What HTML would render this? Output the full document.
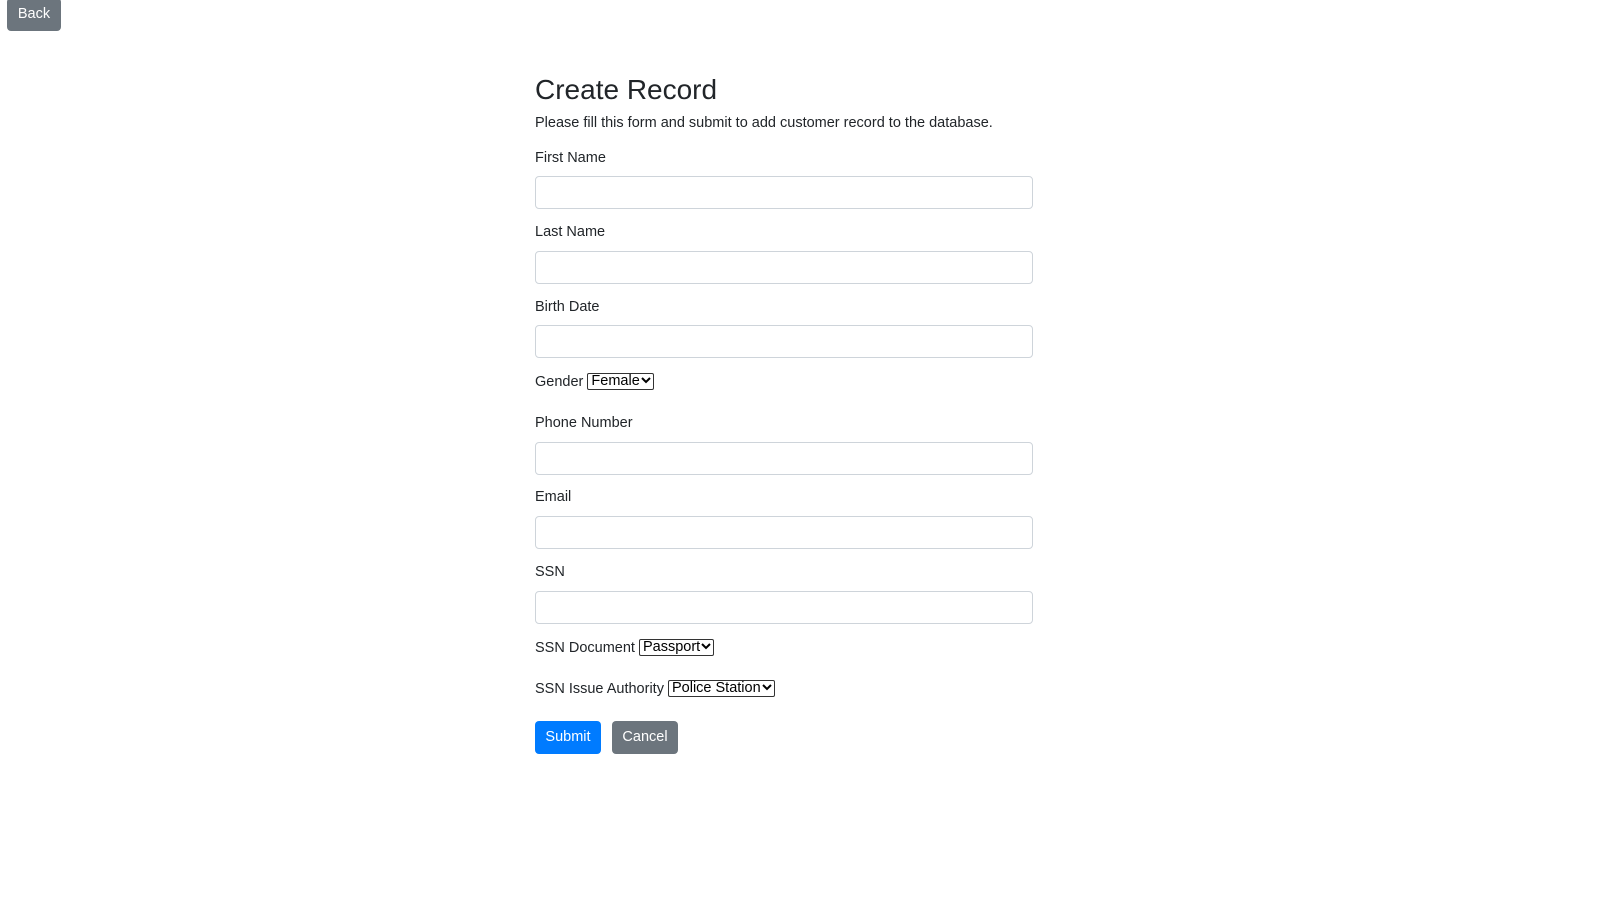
<!DOCTYPE html>
<html><head><style>
body{margin:0;width:1613px;height:912px;background:#fff;font-family:"Liberation Sans",sans-serif;color:#212529;position:relative;overflow:hidden}
.a{position:absolute}
.lbl{position:absolute;left:535px;font-size:14.5px;line-height:17px}
.inp{position:absolute;left:535px;width:496px;height:31px;border:1px solid #ced4da;border-radius:4px}
.sel{display:inline-block;border:1px solid #333;border-radius:2px;font-size:14.5px;line-height:15px;padding:0 2px 0 3px;color:#000;vertical-align:1px}
.sel svg{vertical-align:1px;margin-left:1px}
.btn{position:absolute;color:#fff;font-size:14.5px;text-align:center;border-radius:4px;line-height:33px;height:33px}
</style></head><body>
<div class="btn" style="left:7px;top:-2px;width:54px;background:#6c757d">Back</div>
<div class="a" style="left:535px;top:73px;font-size:28px;line-height:34px;font-weight:500">Create Record</div>
<div class="lbl" style="top:115px">Please fill this form and submit to add customer record to the database.</div>
<div class="lbl" style="top:150px">First Name</div><div class="inp" style="top:176px"></div>
<div class="lbl" style="top:224px">Last Name</div><div class="inp" style="top:251px"></div>
<div class="lbl" style="top:299px">Birth Date</div><div class="inp" style="top:325px"></div>
<div class="lbl" style="top:373px">Gender <span class="sel">Female<svg width="10" height="7" viewBox="0 0 10 7"><path d="M1 1l4 4 4-4" stroke="#000" stroke-width="2" fill="none"/></svg></span></div>
<div class="lbl" style="top:415px">Phone Number</div><div class="inp" style="top:442px"></div>
<div class="lbl" style="top:489px">Email</div><div class="inp" style="top:516px"></div>
<div class="lbl" style="top:564px">SSN</div><div class="inp" style="top:591px"></div>
<div class="lbl" style="top:639px">SSN Document <span class="sel">Passport<svg width="10" height="7" viewBox="0 0 10 7"><path d="M1 1l4 4 4-4" stroke="#000" stroke-width="2" fill="none"/></svg></span></div>
<div class="lbl" style="top:680px">SSN Issue Authority <span class="sel">Police Station<svg width="10" height="7" viewBox="0 0 10 7"><path d="M1 1l4 4 4-4" stroke="#000" stroke-width="2" fill="none"/></svg></span></div>
<div class="btn" style="left:535px;top:721px;width:66px;background:#007bff">Submit</div>
<div class="btn" style="left:612px;top:721px;width:66px;background:#6c757d">Cancel</div>
</body></html>
